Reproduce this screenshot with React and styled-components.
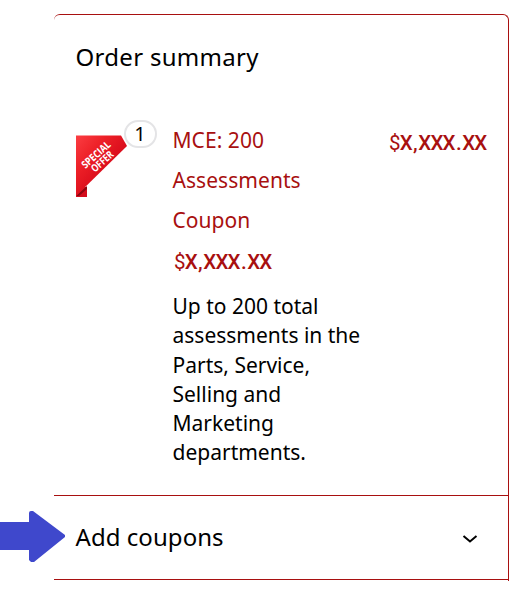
import React from 'react';
import styled, { createGlobalStyle } from 'styled-components';

const red = '#a81010';

const GlobalStyle = createGlobalStyle`
  body {
    margin: 0;
    background: #fff;
    color: #000;
    font-family: 'Noto Sans', 'Open Sans', sans-serif;
  }
`;

const Page = styled.main`
  position: relative;
  box-sizing: border-box;
  width: 519px;
  height: 592px;
  padding: 14px 10px 0 54px;
  overflow: hidden;
`;

const Card = styled.section`
  box-sizing: border-box;
  height: 567px;
  border-top: 1px solid ${red};
  border-right: 1px solid ${red};
  border-radius: 6px 6px 0 0;
`;

const Title = styled.h1`
  margin: 0;
  padding: 25px 0 1px 21.5px;
  font-size: 24px;
  font-weight: 400;
  line-height: 34px;
  letter-spacing: 0.3px;
`;

const Item = styled.div`
  box-sizing: border-box;
  display: flex;
  height: 420px;
  padding: 45px 22px 0 22px;
`;

const Thumb = styled.div`
  position: relative;
  flex: none;
  width: 96.5px;
  height: 80px;

  svg {
    display: block;
    margin-top: 15px;
    overflow: visible;
  }
`;

const Quantity = styled.span`
  position: absolute;
  top: 0;
  left: 47.5px;
  box-sizing: border-box;
  width: 33px;
  height: 28px;
  border: 2px solid #e4e4e6;
  border-radius: 14px;
  background: #fff;
  font-size: 20px;
  line-height: 24px;
  text-align: center;
`;

const Details = styled.div`
  flex: none;
  width: 205px;
`;

const Name = styled.div`
  width: 150px;
  color: ${red};
  font-size: 21px;
  line-height: 40px;
  letter-spacing: 0.05px;
`;

const PriceText = styled.div`
  color: ${red};
  font-family: Roboto, 'Liberation Sans', sans-serif;
  font-size: 20.5px;
  font-weight: 500;
  line-height: 24px;
  letter-spacing: -0.85px;
  white-space: nowrap;
  margin: ${(props) => props.$margin};
`;

const Currency = styled.span`
  font-weight: 400;
`;

const Separator = styled.span`
  margin: 0 1.5px 0 1.3px;
`;

const Description = styled.p`
  margin: 0;
  font-size: 21px;
  line-height: 29.25px;
`;

const CouponRow = styled.div`
  box-sizing: border-box;
  display: flex;
  align-items: center;
  justify-content: space-between;
  height: 85px;
  padding: 0 30px 0 21.5px;
  border-top: 1px solid ${red};
  border-bottom: 1px solid ${red};
  font-size: 24px;
  letter-spacing: 0.05px;

  span {
    padding-bottom: 2px;
  }

  svg {
    margin-top: 3px;
  }
`;

const Pointer = styled.svg`
  position: absolute;
  top: 510px;
  left: 0;
`;

const OfferText = styled.text`
  fill: #fff;
  font-family: 'Open Sans', sans-serif;
  font-size: 10.5px;
  font-weight: 700;
  text-anchor: middle;
`;

const SpecialOffer = () => (
  <svg width="52" height="63" viewBox="0 0 52 63">
    <defs>
      <linearGradient id="ribbon" x1="0" y1="0" x2="1" y2="1">
        <stop offset="0" stopColor="#fb3d42" />
        <stop offset="0.3" stopColor="#ed2027" />
        <stop offset="0.6" stopColor="#d90c1b" />
      </linearGradient>
    </defs>
    <path d="M0 52H11V62H0Z" fill="#d40c1c" />
    <path d="M0 61L11 51V54L3 61Z" fill="#8d0610" />
    <path d="M0 0.5H45L51 11L0 61Z" fill="url(#ribbon)" />
    <g transform="translate(20 19.5) rotate(-42)">
      <OfferText x="0" y="3.7" textLength="35" lengthAdjust="spacingAndGlyphs">SPECIAL</OfferText>
      <OfferText x="0" y="13" textLength="26" lengthAdjust="spacingAndGlyphs">OFFER</OfferText>
    </g>
  </svg>
);

const Chevron = () => (
  <svg width="16" height="10" viewBox="0 0 16 10">
    <path d="M1.5 2L8 7.5L14.5 2" fill="none" stroke="#000" strokeWidth="2" />
  </svg>
);

const Price = ({ margin }) => (
  <PriceText $margin={margin}>
    <Currency>$</Currency>X<Separator>,</Separator>XXX<Separator>.</Separator>XX
  </PriceText>
);

const App = () => {
  return (
    <Page>
      <GlobalStyle />
      <Card>
        <Title>Order summary</Title>
        <Item>
          <Thumb>
            <SpecialOffer />
            <Quantity>1</Quantity>
          </Thumb>
          <Details>
            <Name>MCE: 200 Assessments Coupon</Name>
            <Price margin="10px 0 18px 1.5px" />
            <Description>
              Up to 200 total assessments in the Parts, Service, Selling and Marketing departments.
            </Description>
          </Details>
          <Price margin="11px 0 0 11.5px" />
        </Item>
        <CouponRow>
          <span>Add coupons</span>
          <Chevron />
        </CouponRow>
      </Card>
      <Pointer width="66" height="53" viewBox="0 0 66 53">
        <path
          d="M0 12H29V3Q29 1 31 1H33L65 25V27L34 52H31L29 50V40H0Z"
          fill="#3f48cc"
        />
      </Pointer>
    </Page>
  );
};

export default App;
